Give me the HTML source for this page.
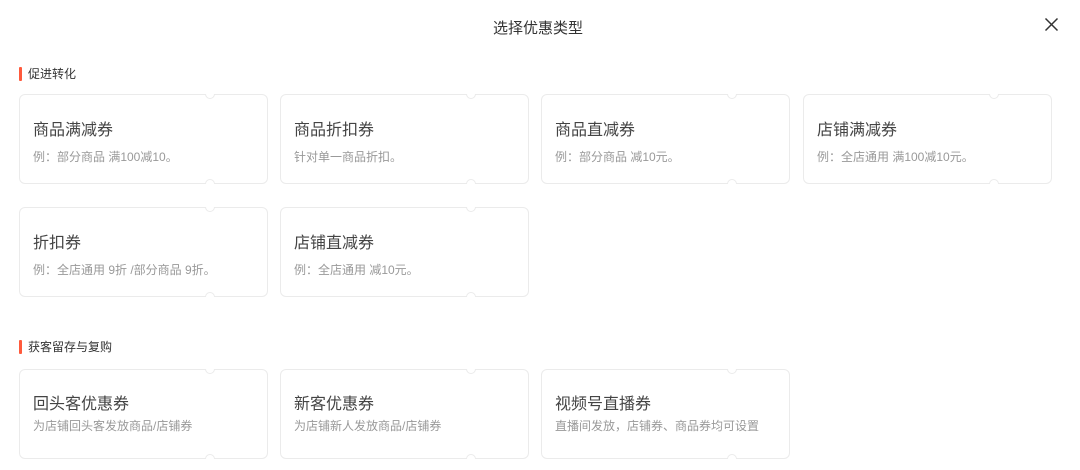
<!DOCTYPE html>
<html><head><meta charset="utf-8"><style>
body{margin:0;width:1080px;height:470px;background:#fff;font-family:"Liberation Sans","Noto Sans CJK SC",sans-serif;position:relative;overflow:hidden}
.t{position:absolute;top:17px;left:-2px;width:1080px;text-align:center;font-size:15px;color:#333}
.sec{position:absolute;left:19px;font-size:12px;color:#333;padding-left:9px;line-height:14px}
.sec:before{content:"";position:absolute;left:0;top:0;width:3px;height:14px;background:#ff5a3c;border-radius:1px}
.c{position:absolute;width:247px;height:88px;border:1px solid #ebebeb;border-radius:6px;box-sizing:content-box}
.c h{position:absolute;left:13px;top:21px;font-size:16px;color:#444}
.c p{position:absolute;left:13px;top:53px;margin:0;font-size:12px;color:#999}
.n{position:absolute;left:185px;width:10px;height:10px;border-radius:50%;background:#fff;border:1px solid #ebebeb;box-sizing:border-box}
.n.a{top:-6px;clip-path:inset(5px 0 0 0)}
.n.b{bottom:-6px;clip-path:inset(0 0 5px 0)}
.s2 h{top:20px}.s2 p{top:47px}
</style></head><body>
<div class="t">选择优惠类型</div>
<svg style="position:absolute;left:1044px;top:17px" width="15" height="15" viewBox="0 0 15 15"><path d="M1.5 1.5L13.5 13.5M13.5 1.5L1.5 13.5" stroke="#333" stroke-width="1.5"/></svg>
<div class="sec" style="top:67px">促进转化</div>
<div class="c" style="left:19px;top:94px"><div class="n a"></div><div class="n b"></div><h>商品满减券</h><p>例：部分商品 满100减10。</p></div>
<div class="c" style="left:280px;top:94px"><div class="n a"></div><div class="n b"></div><h>商品折扣券</h><p>针对单一商品折扣。</p></div>
<div class="c" style="left:541px;top:94px"><div class="n a"></div><div class="n b"></div><h>商品直减券</h><p>例：部分商品 减10元。</p></div>
<div class="c" style="left:803px;top:94px"><div class="n a"></div><div class="n b"></div><h>店铺满减券</h><p>例：全店通用 满100减10元。</p></div>
<div class="c" style="left:19px;top:207px"><div class="n a"></div><div class="n b"></div><h>折扣券</h><p>例：全店通用 9折 /部分商品 9折。</p></div>
<div class="c" style="left:280px;top:207px"><div class="n a"></div><div class="n b"></div><h>店铺直减券</h><p>例：全店通用 减10元。</p></div>
<div class="sec" style="top:340px">获客留存与复购</div>
<div class="c s2" style="left:19px;top:369px"><div class="n a"></div><div class="n b"></div><h>回头客优惠券</h><p>为店铺回头客发放商品/店铺券</p></div>
<div class="c s2" style="left:280px;top:369px"><div class="n a"></div><div class="n b"></div><h>新客优惠券</h><p>为店铺新人发放商品/店铺券</p></div>
<div class="c s2" style="left:541px;top:369px"><div class="n a"></div><div class="n b"></div><h>视频号直播券</h><p>直播间发放，店铺券、商品券均可设置</p></div>
</body></html>
